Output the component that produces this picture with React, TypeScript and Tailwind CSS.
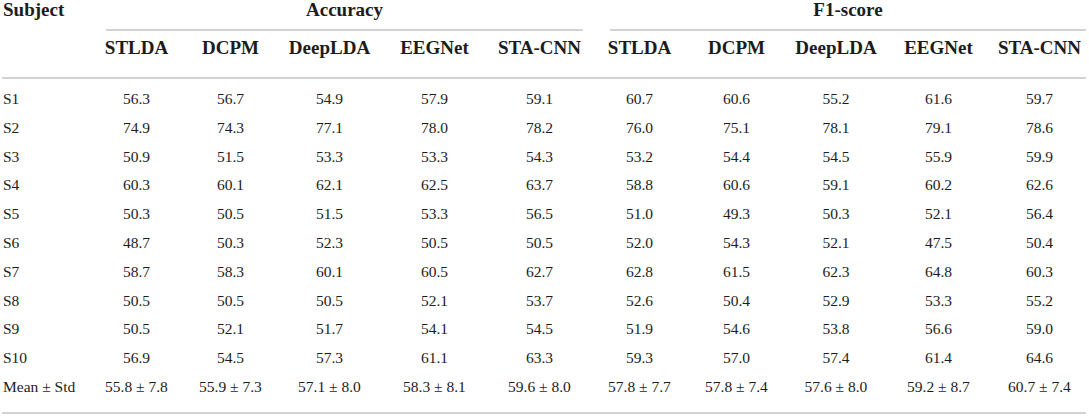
const methods = ['STLDA', 'DCPM', 'DeepLDA', 'EEGNet', 'STA-CNN'];

const rows: [string, string[]][] = [
  ['S1', ['56.3', '56.7', '54.9', '57.9', '59.1', '60.7', '60.6', '55.2', '61.6', '59.7']],
  ['S2', ['74.9', '74.3', '77.1', '78.0', '78.2', '76.0', '75.1', '78.1', '79.1', '78.6']],
  ['S3', ['50.9', '51.5', '53.3', '53.3', '54.3', '53.2', '54.4', '54.5', '55.9', '59.9']],
  ['S4', ['60.3', '60.1', '62.1', '62.5', '63.7', '58.8', '60.6', '59.1', '60.2', '62.6']],
  ['S5', ['50.3', '50.5', '51.5', '53.3', '56.5', '51.0', '49.3', '50.3', '52.1', '56.4']],
  ['S6', ['48.7', '50.3', '52.3', '50.5', '50.5', '52.0', '54.3', '52.1', '47.5', '50.4']],
  ['S7', ['58.7', '58.3', '60.1', '60.5', '62.7', '62.8', '61.5', '62.3', '64.8', '60.3']],
  ['S8', ['50.5', '50.5', '50.5', '52.1', '53.7', '52.6', '50.4', '52.9', '53.3', '55.2']],
  ['S9', ['50.5', '52.1', '51.7', '54.1', '54.5', '51.9', '54.6', '53.8', '56.6', '59.0']],
  ['S10', ['56.9', '54.5', '57.3', '61.1', '63.3', '59.3', '57.0', '57.4', '61.4', '64.6']],
  [
    'Mean ± Std',
    [
      '55.8 ± 7.8', '55.9 ± 7.3', '57.1 ± 8.0', '58.3 ± 8.1', '59.6 ± 8.0',
      '57.8 ± 7.7', '57.8 ± 7.4', '57.6 ± 8.0', '59.2 ± 8.7', '60.7 ± 7.4',
    ],
  ],
];

const grid =
  'grid grid-cols-[90px_93px_95px_103px_107px_103px_97px_97px_102px_103px_99px]';

export default function App() {
  return (
    <div
      className="w-[1089px] h-[416px] bg-white text-[#1c1c1c]"
      style={{ fontFamily: '"Liberation Serif", "DejaVu Serif", serif' }}
    >
      {/* group header */}
      <div className={`${grid} h-[31px] text-[19px] font-bold leading-[20px]`}>
        <div className="pl-[3px]">Subject</div>
        <div className="col-span-5 ml-[16px] mr-[8px] flex justify-center border-b-2 border-[#d2d2d2]">
          Accuracy
        </div>
        <div className="col-span-5 ml-[19px] mr-[3px] flex justify-center border-b-2 border-[#d2d2d2]">
          F1-score
        </div>
      </div>

      {/* method header */}
      <div className={`${grid} h-[46px] pt-[7px] text-[19px] font-bold leading-[20px]`}>
        <div />
        {[...methods, ...methods].map((m, i) => (
          <div key={i} className="text-center whitespace-nowrap">
            {m}
          </div>
        ))}
      </div>

      <div className="ml-[2px] mr-[3px] h-[2px] bg-[#d2d2d2]" />

      <div className="pt-[6px] text-[15.5px]">
        {rows.map(([subject, vals]) => (
          <div key={subject} className={`${grid} h-[28.8px] leading-[28.8px]`}>
            <div className="pl-[3px] whitespace-nowrap">{subject}</div>
            {vals.map((v, i) => (
              <div key={i} className="text-center whitespace-nowrap">
                {v}
              </div>
            ))}
          </div>
        ))}
      </div>

      <div className="mt-[10px] ml-[2px] mr-[3px] h-[2px] bg-[#d2d2d2]" />
    </div>
  );
}
